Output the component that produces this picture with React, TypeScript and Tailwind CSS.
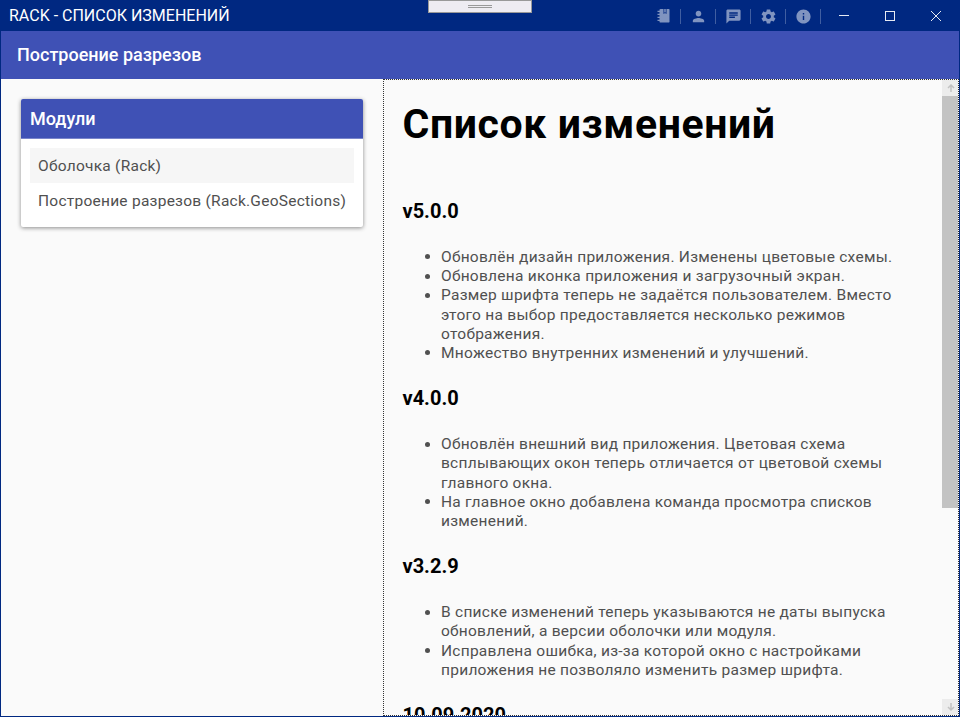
import React from "react";

const sections: { title: string; items: string[][] }[] = [
  {
    title: "v5.0.0",
    items: [
      ["Обновлён дизайн приложения. Изменены цветовые схемы."],
      ["Обновлена иконка приложения и загрузочный экран."],
      [
        "Размер шрифта теперь не задаётся пользователем. Вместо",
        "этого на выбор предоставляется несколько режимов",
        "отображения.",
      ],
      ["Множество внутренних изменений и улучшений."],
    ],
  },
  {
    title: "v4.0.0",
    items: [
      [
        "Обновлён внешний вид приложения. Цветовая схема",
        "всплывающих окон теперь отличается от цветовой схемы",
        "главного окна.",
      ],
      ["На главное окно добавлена команда просмотра списков", "изменений."],
    ],
  },
  {
    title: "v3.2.9",
    items: [
      ["В списке изменений теперь указываются не даты выпуска", "обновлений, а версии оболочки или модуля."],
      ["Исправлена ошибка, из-за которой окно с настройками", "приложения не позволяло изменить размер шрифта."],
    ],
  },
  { title: "10.09.2020", items: [] },
];

const toolIcons = [
  "",
  "M12 12c2.210 0 4-1.790 4-4s-1.790-4-4-4-4 1.790-4 4 1.790 4 4 4zm0 2c-2.670 0-8 1.340-8 4v2h16v-2c0-2.660-5.330-4-8-4z",
  "M20 2H4c-1.100 0-1.990.9-1.990 2L2 22l4-4h14c1.100 0 2-.9 2-2V4c0-1.100-.9-2-2-2zM6 9h12v2H6V9zm8 5H6v-2h8v2zm4-6H6V6h12v2z",
  "M19.430 12.980c.04-.32.07-.64.07-.98s-.03-.66-.07-.98l2.110-1.650c.19-.15.24-.42.12-.64l-2-3.460c-.12-.22-.39-.3-.61-.22l-2.490 1c-.52-.4-1.080-.73-1.690-.98l-.38-2.650C14.460 2.180 14.250 2 14 2h-4c-.25 0-.46.18-.49.42l-.38 2.650c-.61.25-1.170.59-1.690.98l-2.490-1c-.23-.09-.49 0-.61.22l-2 3.460c-.13.22-.07.49.12.64l2.110 1.650c-.04.32-.07.65-.07.98s.03.66.07.98l-2.110 1.650c-.19.15-.24.42-.12.64l2 3.460c.12.22.39.3.61.22l2.490-1c.52.4 1.080.73 1.690.98l.38 2.650c.03.24.24.42.49.42h4c.25 0 .46-.18.49-.42l.38-2.650c.61-.25 1.170-.59 1.690-.98l2.490 1c.23.09.49 0 .61-.22l2-3.460c.12-.22.07-.49-.12-.64l-2.110-1.650zM12 15.500c-1.930 0-3.500-1.570-3.500-3.500s1.570-3.500 3.500-3.500 3.500 1.570 3.500 3.500-1.570 3.500-3.500 3.500z",
  "M12 2C6.480 2 2 6.480 2 12s4.480 10 10 10 10-4.480 10-10S17.520 2 12 2zm1 15h-2v-6h2v6zm0-8h-2V7h2v2z",
];

function NotebookIcon() {
  return (
    <svg width="14" height="14" viewBox="-1.500 0 14 14" className="shrink-0">
      <path
        fill="currentColor"
        d="M3 0H6V5L7.500 4L9 5V0H11.500L12 .5V13L11.500 13.500H2.500L2 13V12H0V10.800H2V9H0V7.800H2V6H0V4.800H2V3H0V1.800H2V.5Z"
      />
      <path fill="currentColor" opacity="0.85" d="M6.600 0H8.400V3.800L7.500 3.200L6.600 3.800Z" />
    </svg>
  );
}

function ToolIcon({ index }: { index: number }) {
  return (
    <div className="flex w-[34px] justify-center">
      {index === 0 ? (
        <NotebookIcon />
      ) : (
        <svg width="17" height="17" viewBox="0 0 24 24" className="shrink-0">
          <path fill="currentColor" d={toolIcons[index]} />
        </svg>
      )}
    </div>
  );
}

function TitleBar() {
  return (
    <header className="relative flex h-[31px] shrink-0 items-center bg-[#002881] text-white">
      <span className="grow whitespace-nowrap pl-[9px] text-[16px] leading-[31px]">RACK - СПИСОК ИЗМЕНЕНИЙ</span>
      <div className="absolute top-0 left-[428px] flex h-[13px] w-[104px] flex-col items-center justify-center gap-px border border-[#999] bg-[#eeecf2]">
        <div className="h-px w-6 bg-[#999]" />
        <div className="h-px w-6 bg-[#999]" />
      </div>
      <div className="flex items-center pt-px text-[#8094c0]">
        {toolIcons.map((_, i) => (
          <React.Fragment key={i}>
            <ToolIcon index={i} />
            <div className="h-[15px] w-px bg-[#405ea1]" />
          </React.Fragment>
        ))}
      </div>
      <svg width="139" height="31" viewBox="0 0 139 31" fill="none" stroke="#e6eaf3" shapeRendering="crispEdges">
        <path d="M18 15.500h10M64.500 11.500h9v9h-9z" />
        <path d="M110 11l10 10M120 11l-10 10" shapeRendering="auto" />
      </svg>
    </header>
  );
}

function ScrollBar() {
  return (
    <div className="flex w-4 shrink-0 flex-col">
      <div className="flex h-4 items-center justify-center bg-[#ececec] pl-px">
        <svg width="8" height="8" viewBox="0 0 8 8" fill="none" stroke="#c2c2c2" strokeWidth="1.5">
          <path d="M4 8V1M1 4l3-3 3 3" />
        </svg>
      </div>
      <div className="h-[412px] bg-[#c3c3c3]" />
      <div className="grow" />
      <div className="flex h-4 items-center justify-center bg-[#ececec] pl-px">
        <svg width="8" height="8" viewBox="0 0 8 8" fill="none" stroke="#c2c2c2" strokeWidth="1.5">
          <path d="M4 0v7M1 4l3 3 3-3" />
        </svg>
      </div>
    </div>
  );
}

export default function App() {
  return (
    <div className="flex h-[717px] w-[960px] flex-col overflow-hidden bg-[#002881] font-['Roboto',sans-serif]">
      <TitleBar />
      <div className="mx-px mb-px flex min-h-0 grow flex-col bg-[#fafafa]">
        <div className="h-12 shrink-0 bg-[#3f51b5] pl-4 text-[18px] leading-[48px] font-medium text-white">
          Построение разрезов
        </div>
        <div className="flex min-h-0 grow">
          <aside className="w-[382px] shrink-0 pt-5 pl-5">
            <div className="h-32 w-[342px] overflow-hidden rounded-[2px] bg-white shadow-[0_1px_4px_rgba(0,0,0,0.45)]">
              <div className="h-10 border-b border-[#7985cb] bg-[#3f51b5] pl-[9px] text-[18px] leading-[39px] font-medium text-white">
                Модули
              </div>
              <div className="px-[9px] pt-[9px] text-[15.5px] tracking-[0.25px] whitespace-nowrap text-[#505050]">
                <div className="h-[35px] bg-[#f6f6f6] pl-2 leading-[36px]">Оболочка (Rack)</div>
                <div className="h-[35px] pl-2 leading-[36px]">Построение разрезов (Rack.GeoSections)</div>
              </div>
            </div>
          </aside>
          <main className="flex min-w-0 grow border border-dotted border-[#333]">
            <div className="min-w-0 grow overflow-hidden pl-[18.5px]">
              <h1 className="mt-[20px] mb-[51.2px] h-12 text-[41px] leading-[48px] font-bold tracking-[0.6px] whitespace-nowrap text-black">
                Список изменений
              </h1>
              {sections.map((s) => (
                <section key={s.title}>
                  <h2 className="mb-[24.8px] h-6 text-[20px] leading-6 font-bold text-black">{s.title}</h2>
                  <ul className="mb-[23.2px] list-none pl-[38.5px] text-[15.5px] leading-[19.2px] tracking-[0.26px] whitespace-nowrap text-[#505050]">
                    {s.items.map((lines, i) => (
                      <li key={i} className="relative">
                        <span className="absolute top-[6.4px] -left-[16px] size-[5px] rounded-full bg-[#505050]" />
                        {lines.map((l) => (
                          <div key={l}>{l}</div>
                        ))}
                      </li>
                    ))}
                  </ul>
                </section>
              ))}
            </div>
            <ScrollBar />
          </main>
        </div>
      </div>
    </div>
  );
}
